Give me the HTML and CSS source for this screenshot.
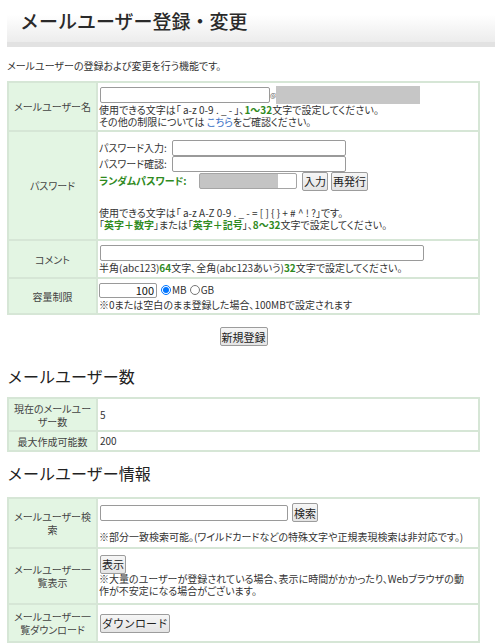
FILE: index.html
```html
<!DOCTYPE html>
<html lang="ja">
<head>
<meta charset="utf-8">
<title>メールユーザー登録・変更</title>
<link rel="stylesheet" href="styles.css">
</head>
<body>
<h1 class="page-title">メールユーザー登録・変更</h1>
<p class="desc">メールユーザーの登録および変更を行う機能です。</p>

<table class="form-table">
  <tr class="r-user">
    <th>メールユーザー名</th>
    <td>
      <div class="ctl-line"><input type="text" class="in in-user"><span class="at">@</span><span class="domain"></span></div>
      <div class="txt">使用できる文字は「 a-z 0-9 . _ - 」、<b class="g">1〜32</b>文字で設定してください。</div>
      <div class="txt">その他の制限については <a href="#" class="link">こちら</a>をご確認ください。</div>
    </td>
  </tr>
  <tr class="r-pass">
    <th>パスワード</th>
    <td>
      <div class="pw-line"><span class="pw-label">パスワード入力:</span><input type="password" class="in in-pw"></div>
      <div class="pw-line"><span class="pw-label">パスワード確認:</span><input type="password" class="in in-pw"></div>
      <div class="ctl-line"><span class="rand-label">ランダムパスワード:</span><span class="rand-box"></span><button class="btn btn-in">入力</button><button class="btn btn-re">再発行</button></div>
      <div class="txt spacer">使用できる文字は「 a-z A-Z 0-9 . _ - = [ ] { } + # ^ ! ?」です。</div>
      <div class="txt">「<b class="g">英字＋数字</b>」または「<b class="g">英字＋記号</b>」、<b class="g">8〜32</b>文字で設定してください。</div>
    </td>
  </tr>
  <tr class="r-comment">
    <th>コメント</th>
    <td>
      <div class="ctl-line"><input type="text" class="in in-comment"></div>
      <div class="txt">半角(abc123)<b class="g">64</b>文字、全角(abc123あいう)<b class="g">32</b>文字で設定してください。</div>
    </td>
  </tr>
  <tr class="r-cap">
    <th>容量制限</th>
    <td>
      <div class="ctl-line"><input type="text" class="in in-cap" value="100"><label class="rad"><input type="radio" name="unit" checked>MB</label><label class="rad"><input type="radio" name="unit">GB</label></div>
      <div class="txt">※0または空白のまま登録した場合、100MBで設定されます</div>
    </td>
  </tr>
</table>

<div class="submit-row"><button class="btn">新規登録</button></div>

<h2 class="sec-title sec-first">メールユーザー数</h2>
<table class="form-table count-table">
  <tr class="r-count1">
    <th>現在のメールユー<br>ザー数</th>
    <td>5</td>
  </tr>
  <tr class="r-count2">
    <th>最大作成可能数</th>
    <td>200</td>
  </tr>
</table>

<h2 class="sec-title">メールユーザー情報</h2>
<table class="form-table info-table">
  <tr class="r-search">
    <th>メールユーザー検<br>索</th>
    <td>
      <div class="ctl-line"><input type="text" class="in in-search"><button class="btn">検索</button></div>
      <div class="txt note">※部分一致検索可能。(ワイルドカードなどの特殊文字や正規表現検索は非対応です。)</div>
    </td>
  </tr>
  <tr class="r-list">
    <th>メールユーザー一<br>覧表示</th>
    <td>
      <div class="ctl-line"><button class="btn">表示</button></div>
      <div class="txt">※大量のユーザーが登録されている場合、表示に時間がかかったり、Webブラウザの動<br>作が不安定になる場合がございます。</div>
    </td>
  </tr>
  <tr class="r-dl">
    <th>メールユーザー一<br>覧ダウンロード</th>
    <td>
      <div class="ctl-line"><button class="btn">ダウンロード</button></div>
    </td>
  </tr>
</table>
</body>
</html>
```
FILE: styles.css
```css
html, body {
  margin: 0;
  padding: 0;
  background: #fff;
}
body {
  font-family: "Noto Sans CJK JP", "Noto Sans", sans-serif;
  font-size: 10px;
  color: #333;
  font-feature-settings: "palt";
}
.page-title {
  margin: 3px 5px 0 7px;
  padding: 4px 13px 7px;
  font-size: 19px;
  line-height: 28px;
  font-weight: 500;
  color: #2a2a2a;
  font-feature-settings: normal;
  background: linear-gradient(#ffffff 30%, #ececec);
  border-bottom: 5px solid #e2e2e2;
}
.desc {
  margin: 12px 0 0 7px;
  line-height: 13px;
  color: #333;
}
.form-table {
  margin: 9px 0 0 7px;
  width: 473px;
  border-collapse: collapse;
  border: 2px solid #d6e6d6;
}
.form-table th,
.form-table td {
  border: 2px solid #d6e6d6;
}
.form-table th {
  width: 83px;
  background: #e3f5e3;
  font-weight: normal;
  text-align: center;
  vertical-align: middle;
  color: #444;
  line-height: 13px;
  padding: 0 2px;
  white-space: nowrap;
}
.form-table td {
  background: #fff;
  vertical-align: middle;
  padding: 0 2px 0 1px;
  line-height: 12px;
}
.r-user { height: 49px; }
.r-pass { height: 109px; }
.r-comment { height: 38px; }
.r-cap { height: 36px; }
.r-count1 { height: 33px; }
.r-count2 { height: 20px; }
.r-search { height: 50px; }
.r-list { height: 56px; }
.r-dl { height: 38px; }

.ctl-line {
  display: flex;
  align-items: center;
  height: 18px;
}
.pw-line {
  display: flex;
  align-items: center;
  height: 16px;
}
.txt {
  line-height: 12px;
  white-space: nowrap;
}
.spacer { margin-top: 17px; }
.note { margin-top: 9px; }
.g {
  color: #2f8a1e;
  font-weight: bold;
}
.link {
  color: #3b6fc6;
  text-decoration: none;
}
.in {
  box-sizing: border-box;
  height: 16px;
  margin: 0;
  padding: 0 2px;
  border: 1px solid #9a9a9a;
  border-radius: 2px;
  background: #fff;
  font-family: "Noto Sans CJK JP", sans-serif;
  font-size: 10px;
}
.in-user { width: 170px; margin-left: 1px; }
.at {
  font-size: 7px;
  color: #555;
  width: 6px;
  text-align: center;
}
.domain {
  display: inline-block;
  width: 144px;
  height: 18px;
  background: #c6c6c6;
}
.pw-label {
  display: inline-block;
  width: 73px;
  white-space: nowrap;
}
.in-pw { width: 174px; height: 16px; }
.rand-label {
  display: inline-block;
  width: 100px;
  color: #2f8a1e;
  font-weight: bold;
  white-space: nowrap;
}
.rand-box {
  box-sizing: border-box;
  display: inline-block;
  width: 98px;
  height: 16px;
  border: 1px solid #a5a5a5;
  border-radius: 2px;
  background: linear-gradient(to right, #c4c4c4 78px, #ffffff 78px);
}
.btn {
  box-sizing: border-box;
  height: 19px;
  margin: 0 0 0 4px;
  padding: 0 1px;
  font-family: "Noto Sans CJK JP", sans-serif;
  font-size: 11px;
  line-height: 16px;
  color: #222;
  background: linear-gradient(#f6f6f6, #e4e4e4);
  border: 1px solid #9c9c9c;
  border-radius: 2px;
}
.btn-in { margin-left: 5px; }
.btn-re { margin-left: 3px; }
.ctl-line > .btn:first-child { margin-left: 1px; }
.in-comment { width: 324px; margin-left: 1px; }
.in-cap {
  width: 58px;
  height: 15px;
  text-align: right;
  font-size: 11px;
  color: #111;
}
.rad {
  display: inline-flex;
  align-items: center;
  margin-left: 4px;
  font-size: 10px;
}
.rad + .rad { margin-left: 3px; }
.rad input {
  width: 10px;
  height: 10px;
  margin: 0 1px 0 0;
}
.in-search { width: 188px; margin-left: 1px; }
.submit-row {
  width: 473px;
  margin: 12px 0 0 7px;
  display: flex;
  justify-content: center;
}
.submit-row .btn { margin: 0; }
.sec-title {
  margin: 11px 0 0 7px;
  font-size: 16px;
  line-height: 20px;
  font-weight: normal;
  color: #222;
  font-feature-settings: normal;
}
.sec-first { margin-top: 20px; }
.count-table { margin-top: 11px; }
.count-table td { padding-left: 2px; }
.info-table { margin-top: 14px; }
```
